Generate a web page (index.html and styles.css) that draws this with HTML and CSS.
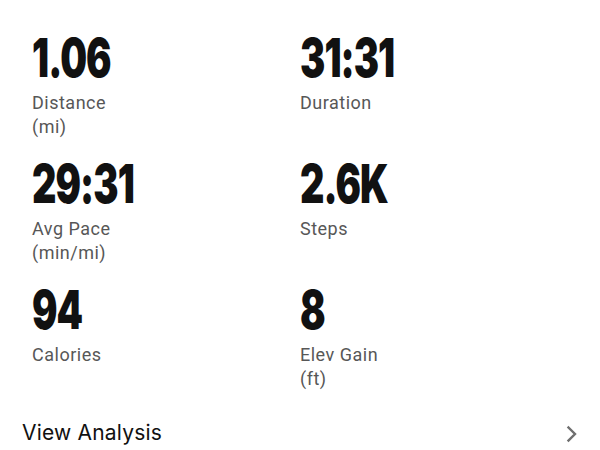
FILE: index.html
```html
<!DOCTYPE html>
<html lang="en">
<head>
<meta charset="utf-8">
<title>Run Summary</title>
<link rel="stylesheet" href="styles.css">
</head>
<body>
<main class="summary">
  <section class="stats">
    <div class="stat">
      <div class="value"><span class="num">1.06</span></div>
      <div class="label">Distance<br>(mi)</div>
    </div>
    <div class="stat">
      <div class="value"><span class="num">31:31</span></div>
      <div class="label">Duration</div>
    </div>
    <div class="stat">
      <div class="value"><span class="num">29:31</span></div>
      <div class="label">Avg Pace<br>(min/mi)</div>
    </div>
    <div class="stat">
      <div class="value"><span class="num">2.6K</span></div>
      <div class="label">Steps</div>
    </div>
    <div class="stat">
      <div class="value"><span class="num">94</span></div>
      <div class="label">Calories</div>
    </div>
    <div class="stat">
      <div class="value"><span class="num">8</span></div>
      <div class="label">Elev Gain<br>(ft)</div>
    </div>
  </section>
  <a class="analysis" href="#">
    <span class="analysis-text">View Analysis</span>
    <svg class="chevron" width="12" height="18" viewBox="0 0 12 18" aria-hidden="true">
      <path d="M2.5 2.5 L9 9 L2.5 15.5" fill="none" stroke="#6f6f6f" stroke-width="2.4" stroke-linecap="square"/>
    </svg>
  </a>
</main>
</body>
</html>
```
FILE: styles.css
```css
html, body {
  margin: 0;
  padding: 0;
  background: #ffffff;
}

.summary {
  width: 600px;
  height: 450px;
  padding-top: 36px;
  box-sizing: border-box;
  overflow: hidden;
}

.stats {
  display: grid;
  grid-template-columns: 268px 268px;
  row-gap: 23px;
  padding-left: 32px;
}

.stat {
  display: flex;
  flex-direction: column;
  min-height: 103px;
}

.value {
  height: 44px;
  line-height: 44px;
}

.num {
  display: inline-block;
  font-family: Inter, "DejaVu Sans", sans-serif;
  font-weight: 900;
  font-size: 54px;
  line-height: 44px;
  letter-spacing: -1.3px;
  color: #111111;
  transform: scaleX(0.7);
  transform-origin: left center;
}

.label {
  margin-top: 11px;
  font-family: Roboto, "Noto Sans", sans-serif;
  font-size: 18px;
  line-height: 24px;
  letter-spacing: 0.5px;
  color: #575757;
}

.analysis {
  display: flex;
  align-items: center;
  justify-content: space-between;
  margin-top: 30px;
  padding: 0 22px 0 22px;
  text-decoration: none;
  color: #111111;
}

.analysis-text {
  font-family: Inter, "Liberation Sans", sans-serif;
  font-size: 21px;
  line-height: 24px;
  letter-spacing: 0.2px;
}

.chevron {
  display: block;
  margin-top: 1px;
}
```
